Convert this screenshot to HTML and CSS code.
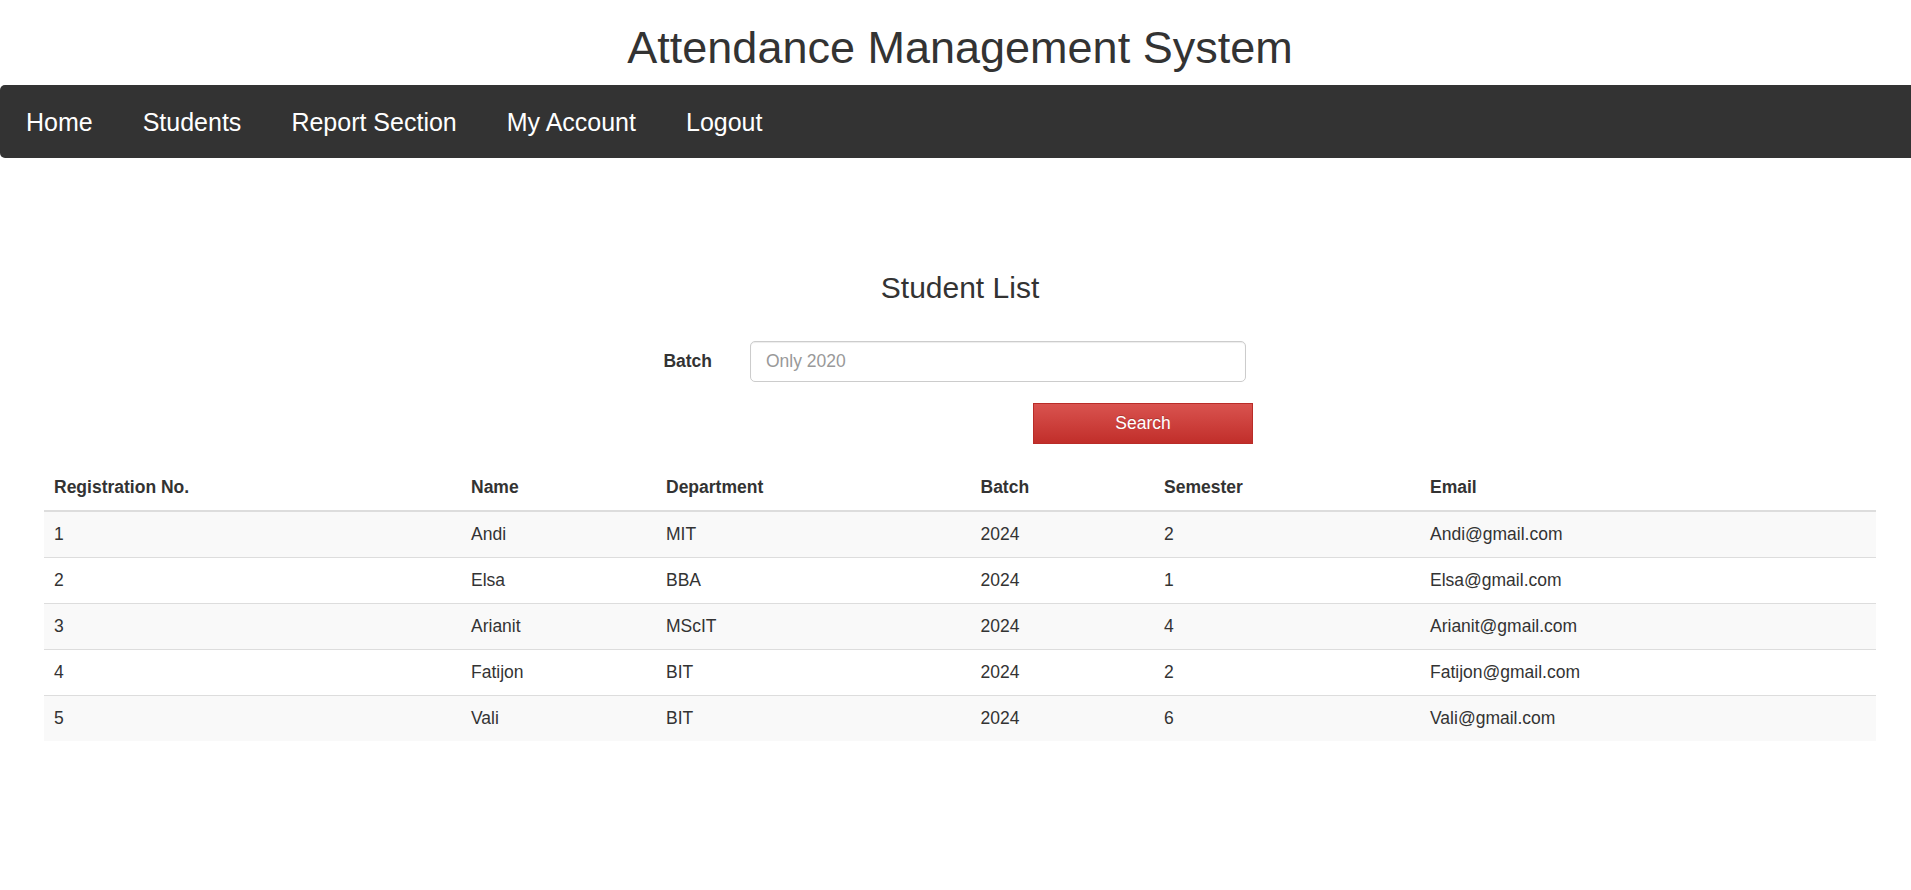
FILE: index.html
```html
<!DOCTYPE html>
<html lang="en">
<head>
<meta charset="utf-8">
<title>Attendance Management System</title>
<link rel="stylesheet" href="styles.css">
</head>
<body>
<div class="page">
  <header class="site-header">
    <h1 class="site-title">Attendance Management System</h1>
    <nav class="navbar">
      <ul class="nav-list">
        <li><a class="nav-link" href="#">Home</a></li>
        <li><a class="nav-link" href="#">Students</a></li>
        <li><a class="nav-link" href="#">Report Section</a></li>
        <li><a class="nav-link" href="#">My Account</a></li>
        <li><a class="nav-link" href="#">Logout</a></li>
      </ul>
    </nav>
  </header>

  <main class="content">
    <h3 class="section-title">Student List</h3>
    <form class="search-form">
      <label class="search-label" for="batch">Batch</label>
      <div class="search-field">
        <input class="search-input" id="batch" type="text" placeholder="Only 2020">
      </div>
      <div class="search-actions">
        <button class="btn-search" type="button">Search</button>
      </div>
    </form>

    <table class="student-table">
      <colgroup>
        <col class="c-reg">
        <col class="c-name">
        <col class="c-dept">
        <col class="c-batch">
        <col class="c-sem">
        <col class="c-email">
      </colgroup>
      <thead>
        <tr>
          <th>Registration No.</th>
          <th>Name</th>
          <th>Department</th>
          <th>Batch</th>
          <th>Semester</th>
          <th>Email</th>
        </tr>
      </thead>
      <tbody>
        <tr><td>1</td><td>Andi</td><td>MIT</td><td>2024</td><td>2</td><td>Andi@gmail.com</td></tr>
        <tr><td>2</td><td>Elsa</td><td>BBA</td><td>2024</td><td>1</td><td>Elsa@gmail.com</td></tr>
        <tr><td>3</td><td>Arianit</td><td>MScIT</td><td>2024</td><td>4</td><td>Arianit@gmail.com</td></tr>
        <tr><td>4</td><td>Fatijon</td><td>BIT</td><td>2024</td><td>2</td><td>Fatijon@gmail.com</td></tr>
        <tr><td>5</td><td>Vali</td><td>BIT</td><td>2024</td><td>6</td><td>Vali@gmail.com</td></tr>
      </tbody>
    </table>
  </main>
</div>
</body>
</html>
```
FILE: styles.css
```css
html, body {
  margin: 0;
  padding: 0;
  overflow: hidden;
  background: #fff;
}

body {
  font-family: "Liberation Sans", Arial, Helvetica, sans-serif;
  font-size: 17.5px;
  line-height: 25px;
  color: #333;
}

.page {
  width: 1920px;
}

.site-title {
  margin: 23px 0 12.5px;
  font-size: 45px;
  font-weight: normal;
  line-height: 1.1;
  text-align: center;
  color: #333;
}

.navbar {
  height: 73px;
  display: flex;
  align-items: center;
  background: #333;
  border-radius: 5px;
  padding-left: 1px;
}

.nav-list {
  list-style: none;
  margin: 0;
  padding: 0;
  display: flex;
}

.nav-link {
  display: block;
  padding: 0 25px;
  font-size: 25px;
  line-height: 30px;
  color: #fff;
  text-decoration: none;
}

.section-title {
  margin: 113px 0 0;
  font-size: 30px;
  font-weight: normal;
  line-height: 33px;
  text-align: center;
  color: #333;
}

.search-form {
  margin-top: 37px;
  display: grid;
  grid-template-columns: 731px 534px;
  grid-template-rows: 41px 41px;
  row-gap: 20.5px;
}

.search-label {
  display: flex;
  align-items: center;
  justify-content: flex-end;
  padding-right: 19px;
  font-weight: bold;
}

.search-field {
  padding: 0 19px;
}

.search-input {
  box-sizing: border-box;
  width: 100%;
  height: 41px;
  padding: 7px 15px;
  font-family: inherit;
  font-size: 17.5px;
  color: #555;
  border: 1px solid #ccc;
  border-radius: 5px;
  box-shadow: inset 0 1px 1px rgba(0, 0, 0, 0.075);
  outline: none;
}

.search-input::placeholder {
  color: #999;
}

.search-actions {
  grid-column: 2;
  display: flex;
  justify-content: flex-end;
  padding-right: 12px;
}

.btn-search {
  width: 220px;
  height: 41px;
  font-family: inherit;
  font-size: 17.5px;
  color: #fff;
  background: linear-gradient(to bottom, #d9534f 0%, #c12e2a 100%);
  border: 1px solid #b92c28;
  border-radius: 0;
  padding: 0;
  text-shadow: 0 -1px 0 rgba(0, 0, 0, 0.2);
}

.student-table {
  margin: 21.5px 0 0 44px;
  width: 1832px;
  border-collapse: collapse;
  border-spacing: 0;
  table-layout: fixed;
}

.c-reg { width: 417px; }
.c-name { width: 195px; }
.c-dept { width: 314.5px; }
.c-batch { width: 183.5px; }
.c-sem { width: 266px; }
.c-email { width: auto; }

.student-table th,
.student-table td {
  padding: 10px;
  line-height: 25px;
  text-align: left;
  vertical-align: top;
}

.student-table th {
  font-weight: bold;
  border-bottom: 2px solid #ddd;
}

.student-table td {
  border-top: 1px solid #ddd;
}

.student-table tbody tr:nth-child(odd) {
  background: #f9f9f9;
}
```
